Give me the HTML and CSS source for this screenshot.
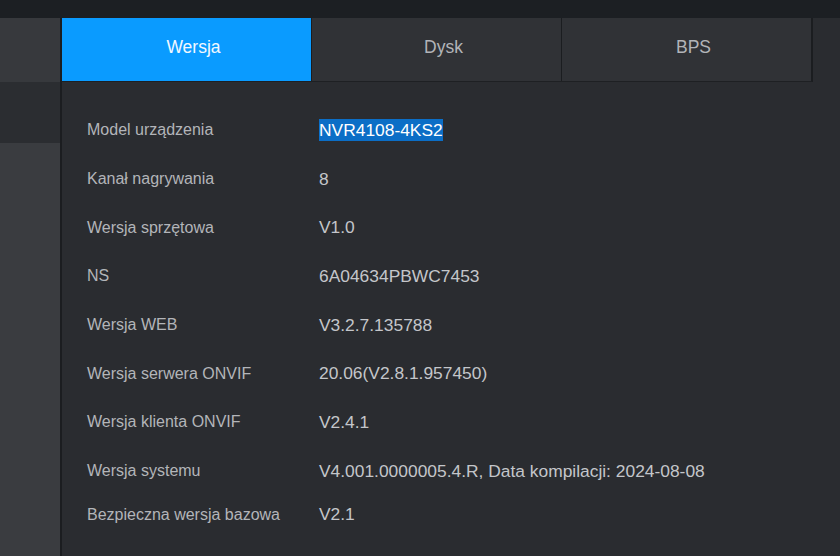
FILE: index.html
```html
<!DOCTYPE html>
<html lang="pl">
<head>
<meta charset="utf-8">
<title>Wersja</title>
<link rel="stylesheet" href="styles.css">
</head>
<body>
<div class="topbar"></div>
<div class="main">
  <aside class="sidebar">
    <div class="side-item side-a"></div>
    <div class="side-item side-b"></div>
    <div class="side-rest"></div>
  </aside>
  <section class="content">
    <div class="tabs">
      <div class="tab active">Wersja</div>
      <div class="tab">Dysk</div>
      <div class="tab">BPS</div>
    </div>
    <div class="info">
      <div class="row"><span class="label">Model urządzenia</span><span class="value"><span class="sel">NVR4108-4KS2</span></span></div>
      <div class="row"><span class="label">Kanał nagrywania</span><span class="value">8</span></div>
      <div class="row"><span class="label">Wersja sprzętowa</span><span class="value">V1.0</span></div>
      <div class="row"><span class="label">NS</span><span class="value">6A04634PBWC7453</span></div>
      <div class="row"><span class="label">Wersja WEB</span><span class="value">V3.2.7.135788</span></div>
      <div class="row"><span class="label">Wersja serwera ONVIF</span><span class="value">20.06(V2.8.1.957450)</span></div>
      <div class="row"><span class="label">Wersja klienta ONVIF</span><span class="value">V2.4.1</span></div>
      <div class="row"><span class="label">Wersja systemu</span><span class="value">V4.001.0000005.4.R, Data kompilacji: 2024-08-08</span></div>
      <div class="row row-last"><span class="label">Bezpieczna wersja bazowa</span><span class="value">V2.1</span></div>
    </div>
  </section>
</div>
</body>
</html>
```
FILE: styles.css
```css
html, body {
  margin: 0;
  padding: 0;
  height: 100%;
  overflow: hidden;
}
body {
  background: #2a2c30;
  font-family: "Liberation Sans", Arial, sans-serif;
  font-size: 16px;
}
.topbar {
  height: 18px;
  background: #1c1f23;
}
.main {
  display: flex;
  height: 538px;
}
.sidebar {
  width: 60px;
  border-right: 2px solid #1b1d20;
  display: flex;
  flex-direction: column;
}
.side-a {
  height: 64px;
  background: #37393d;
}
.side-b {
  height: 61px;
  background: #2b2d31;
}
.side-rest {
  flex: 1;
  background: #3a3c40;
}
.content {
  flex: 1;
  display: flex;
  flex-direction: column;
  align-items: flex-start;
}
.tabs {
  display: flex;
  height: 63px;
  border-bottom: 1px solid #1e2023;
  border-right: 2px solid #1b1d20;
}
.tab {
  width: 250px;
  display: flex;
  align-items: center;
  justify-content: center;
  background: #303236;
  color: #b2b4b8;
  border-right: 1px solid #1b1d20;
  font-size: 17.5px;
  padding: 0 0 4px 14px;
  box-sizing: border-box;
}
.tab:last-child {
  border-right: none;
  width: 249px;
}
.tab.active {
  background: #0a9bff;
  color: #f2f8ff;
}
.info {
  padding: 24px 0 0 25px;
}
.row {
  display: flex;
  align-items: center;
  height: 48.7px;
}
.row-last {
  height: 38px;
}
.label {
  width: 232px;
  color: #b3b5b9;
}
.value {
  color: #c4c6ca;
  font-size: 17.4px;
}
.sel {
  background: #0b6ec6;
  color: #ffffff;
  padding: 1px 0;
}
```
